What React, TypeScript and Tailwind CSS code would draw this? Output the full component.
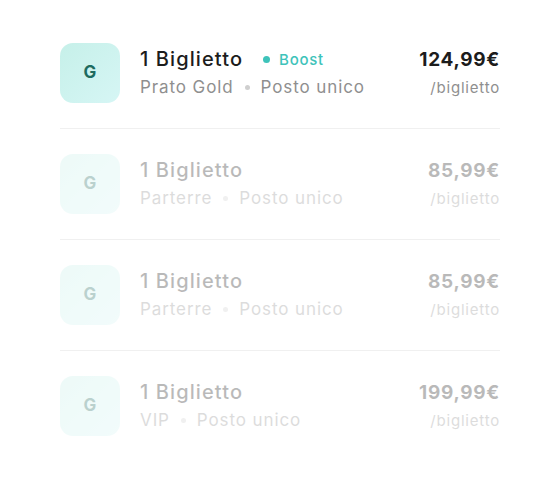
import React from "react";

type Ticket = {
  area: string;
  price: string;
  active?: boolean;
  boost?: boolean;
};

const tickets: Ticket[] = [
  { area: "Prato Gold", price: "124,99€", active: true, boost: true },
  { area: "Parterre", price: "85,99€" },
  { area: "Parterre", price: "85,99€" },
  { area: "VIP", price: "199,99€" },
];

function TicketRow({ t, last }: { t: Ticket; last: boolean }) {
  return (
    <div className={last ? "" : "border-b border-[#f0f0f0]"}>
      <div
        className={
          "flex items-center py-[25px] " + (t.active ? "" : "opacity-30")
        }
      >
        <div className="w-[60px] h-[60px] rounded-[13px] bg-gradient-to-br from-[#c6f0e9] to-[#d6f6f5] flex items-center justify-center shrink-0">
          <span className="text-[17px] font-bold text-[#1d6b5f]">G</span>
        </div>
        <div className="ml-[20px] flex-1 min-w-0">
          <div className="flex items-center h-[24px]">
            <span className="text-[20px] font-medium text-[#1c1c1c] leading-none tracking-[1.1px]">
              1 Biglietto
            </span>
            {t.boost && (
              <span className="ml-[20px] flex items-center">
                <span className="w-[7px] h-[7px] rounded-full bg-[#3ec3ba]" />
                <span className="ml-[9px] text-[15px] font-medium text-[#3ec3ba] leading-none tracking-[0.7px]">
                  Boost
                </span>
              </span>
            )}
          </div>
          <div className="flex items-center mt-[4px] text-[17px] text-[#8f8f8f] leading-none h-[24px] tracking-[0.9px]">
            <span>{t.area}</span>
            <span className="mx-[11px] w-[5px] h-[5px] rounded-full bg-[#cfcfcf]" />
            <span>Posto unico</span>
          </div>
        </div>
        <div className="flex flex-col items-end">
          <div className="h-[24px] flex items-center text-[19px] font-bold text-[#1c1c1c] leading-none tracking-[0.7px]">
            {t.price}
          </div>
          <div className="mt-[4px] h-[24px] flex items-center text-[15px] text-[#8f8f8f] leading-none tracking-[0.8px]">
            /biglietto
          </div>
        </div>
      </div>
    </div>
  );
}

export default function App() {
  return (
    <div
      className="w-[560px] h-[480px] bg-white px-[60px] pt-[18px]"
      style={{ fontFamily: "Inter, 'Noto Sans', sans-serif" }}
    >
      {tickets.map((t, i) => (
        <TicketRow key={i} t={t} last={i === tickets.length - 1} />
      ))}
    </div>
  );
}
